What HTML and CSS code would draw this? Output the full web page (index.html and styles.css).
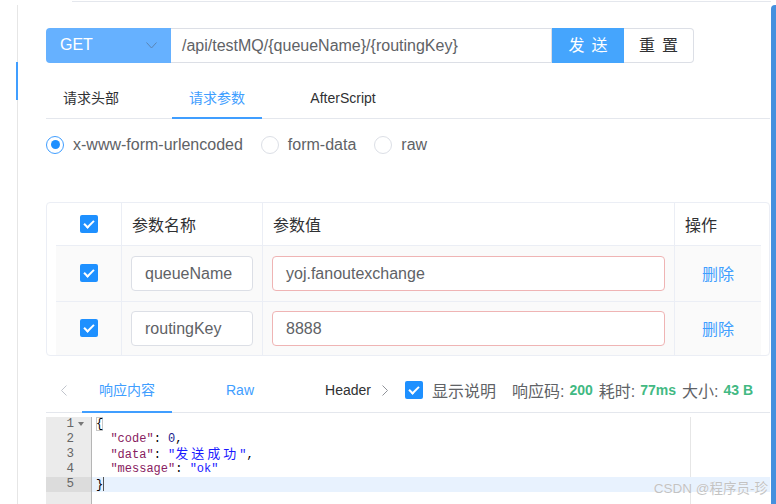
FILE: index.html
```html
<!DOCTYPE html>
<html lang="zh">
<head>
<meta charset="utf-8">
<title>API 调试</title>
<link rel="stylesheet" href="styles.css">
</head>
<body>
<div class="app">
  <aside class="side"><div class="side-active"></div></aside>
  <main class="main">
    <div class="topline"></div>
    <div class="reqbar">
      <div class="method">
        <span class="method-text">GET</span>
        <svg class="chev" width="11" height="7" viewBox="0 0 11 7"><polyline points="0.5,0.5 5.5,6 10.5,0.5" fill="none" stroke="#5a84b4" stroke-width="1"/></svg>
      </div>
      <div class="url">/api/testMQ/{queueName}/{routingKey}</div>
      <button class="btn btn-send">发送</button>
      <button class="btn btn-reset">重置</button>
    </div>

    <div class="tabs">
      <div class="tab">请求头部</div>
      <div class="tab active">请求参数</div>
      <div class="tab">AfterScript</div>
    </div>

    <div class="radios">
      <label class="radio"><span class="radio-dot checked"></span>x-www-form-urlencoded</label>
      <label class="radio"><span class="radio-dot"></span>form-data</label>
      <label class="radio"><span class="radio-dot"></span>raw</label>
    </div>

    <div class="table">
      <div class="tr th">
        <div class="td td-cb"><span class="cb"></span></div>
        <div class="td td-text">参数名称</div>
        <div class="td td-text">参数值</div>
        <div class="td td-text td-last">操作</div>
      </div>
      <div class="tr row">
        <div class="td td-cb"><span class="cb"></span></div>
        <div class="td td-input"><div class="input">queueName</div></div>
        <div class="td td-input"><div class="input input-warn">yoj.fanoutexchange</div></div>
        <div class="td td-op td-last"><span class="link">删除</span></div>
      </div>
      <div class="tr row">
        <div class="td td-cb"><span class="cb"></span></div>
        <div class="td td-input"><div class="input">routingKey</div></div>
        <div class="td td-input"><div class="input input-warn">8888</div></div>
        <div class="td td-op td-last"><span class="link">删除</span></div>
      </div>
    </div>

    <div class="rtabs">
      <span class="nav-arrow">
        <svg width="6" height="11" viewBox="0 0 6 11"><polyline points="5.5,0.5 0.5,5.5 5.5,10.5" fill="none" stroke="#c0c4cc" stroke-width="1"/></svg>
      </span>
      <span class="rtab active">响应内容</span>
      <span class="rtab rtab-raw">Raw</span>
      <span class="rtab rtab-header">Header</span>
      <span class="nav-next">
        <svg width="6" height="11" viewBox="0 0 6 11"><polyline points="0.5,0.5 5.5,5.5 0.5,10.5" fill="none" stroke="#909399" stroke-width="1"/></svg>
      </span>
      <span class="cb cb-meta"></span>
      <span class="meta-show">显示说明</span>
      <span class="meta-label meta-first">响应码:</span><b class="meta-val">200</b>
      <span class="meta-label">耗时:</span><b class="meta-val">77ms</b>
      <span class="meta-label">大小:</span><b class="meta-val">43 B</b>
    </div>

    <div class="editor">
      <div class="gutter">
        <div class="gl"><span>1</span><span class="fold"><i class="fold-tri"></i></span></div>
        <div class="gl"><span>2</span><span class="fold"></span></div>
        <div class="gl"><span>3</span><span class="fold"></span></div>
        <div class="gl"><span>4</span><span class="fold"></span></div>
        <div class="gl gl-active"><span>5</span><span class="fold"></span></div>
      </div>
      <div class="code">
        <div class="cl"><span class="bracket">{</span></div>
        <div class="cl">  <span class="k">"code"</span>: <span class="n">0</span>,</div>
        <div class="cl">  <span class="k">"data"</span>: <span class="s">"<span class="cjk">发送成功</span>"</span>,</div>
        <div class="cl">  <span class="k">"message"</span>: <span class="s">"ok"</span></div>
        <div class="cl cl-active">}<span class="cursor"></span></div>
      </div>
    </div>
  </main>
  <div class="scrollbar"></div>
  <div class="watermark">CSDN @程序员-珍</div>
</div>
</body>
</html>
```
FILE: styles.css
```css
* { box-sizing: border-box; }
html, body { margin: 0; padding: 0; background: #fff; }
body {
  font-family: "Liberation Sans", "Noto Sans CJK SC", sans-serif;
  color: #303133;
}
.app {
  position: relative;
  display: flex;
  width: 776px;
  height: 504px;
  overflow: hidden;
}

/* left sidebar edge */
.side {
  width: 18px;
  flex: none;
  margin-top: 5px;
  border-right: 1px solid #e6e6e6;
  display: flex;
  justify-content: flex-end;
}
.side-active {
  width: 2px;
  height: 38px;
  margin-top: 57px;
  margin-right: -1px;
  background: #409eff;
}

/* right scrollbar */
.scrollbar {
  width: 5px;
  flex: none;
  margin-top: 5px;
  background: #4590de;
  border-top-left-radius: 4px;
}

.main {
  flex: 1;
  min-width: 0;
  padding: 1px 1px 0 28px;
  display: flex;
  flex-direction: column;
}
.topline {
  height: 1px;
  margin-left: 26px;
  margin-right: -1px;
  background: #e4e7ed;
}

/* request bar */
.reqbar {
  display: flex;
  height: 35px;
  margin-top: 26px;
}
.method {
  width: 125px;
  display: flex;
  align-items: center;
  padding: 0 14px;
  background: #66b1ff;
  border-radius: 4px 0 0 4px;
  color: #fff;
  font-size: 16px;
}
.method-text { line-height: 18px; }
.chev { margin-left: auto; }
.url {
  width: 381px;
  border: 1px solid #dcdfe6;
  border-left: none;
  padding-left: 11px;
  font-size: 16px;
  line-height: 33px;
  color: #606266;
  white-space: nowrap;
}
.btn {
  font-family: "Liberation Sans", "Noto Sans CJK SC", sans-serif;
  font-size: 16px;
  letter-spacing: 7px;
  padding: 0 0 0 7px;
  margin: 0;
  line-height: 33px;
  cursor: pointer;
}
.btn-send {
  width: 72px;
  border: none;
  background: #45a5fd;
  color: #fff;
}
.btn-reset {
  width: 70px;
  border: 1px solid #dcdfe6;
  border-left: none;
  border-radius: 0 4px 4px 0;
  background: #fff;
  color: #303133;
}

/* request tabs */
.tabs {
  display: flex;
  gap: 36px;
  height: 40px;
  margin-top: 17px;
  border-bottom: 1px solid #e4e7ed;
}
.tab {
  width: 90px;
  text-align: center;
  font-size: 14px;
  line-height: 36px;
  color: #303133;
}
.tab.active {
  color: #409eff;
  border-bottom: 2px solid #409eff;
  margin-bottom: -1px;
}

/* radios */
.radios {
  display: flex;
  align-items: center;
  height: 20px;
  margin-top: 16px;
}
.radio {
  display: flex;
  align-items: center;
  margin-right: 18px;
  font-size: 16px;
  line-height: 20px;
  color: #606266;
}
.radio-dot {
  width: 18px;
  height: 18px;
  border: 1px solid #dcdfe6;
  border-radius: 50%;
  margin-right: 9px;
  display: flex;
  align-items: center;
  justify-content: center;
  background: #fff;
}
.radio-dot.checked { border-color: #409eff; }
.radio-dot.checked::after {
  content: "";
  width: 9px;
  height: 9px;
  border-radius: 50%;
  background: #1e90ff;
}

/* checkbox */
.cb {
  display: inline-flex;
  align-items: center;
  justify-content: center;
  width: 18px;
  height: 18px;
  border-radius: 2px;
  background: #1e90ff;
}
.cb::after {
  content: "";
  width: 4px;
  height: 8px;
  margin-top: -2px;
  border: solid #fff;
  border-width: 0 2px 2px 0;
  transform: rotate(45deg);
}

/* table */
.table {
  margin-top: 47px;
  border: 1px solid #ebeef5;
  border-radius: 4px;
  padding: 0 8px 0 9px;
}
.tr {
  display: grid;
  grid-template-columns: 66px 141px 412px 86px;
}
.th { height: 43px; border-bottom: 1px solid #ebeef5; }
.row { height: 55px; background: #fafafa; }
.row + .row { border-top: 1px solid #ebeef5; height: 54px; }
.td {
  display: flex;
  align-items: center;
  border-right: 1px solid #ebeef5;
}
.td-last { border-right: none; }
.td-cb { justify-content: center; }
.td-text {
  padding-left: 10px;
  font-size: 16px;
  color: #303133;
}
.td-input { padding: 0 9px 0 9px; }
.input {
  width: 100%;
  height: 35px;
  border: 1px solid #dcdfe6;
  border-radius: 4px;
  background: #fff;
  padding-left: 13px;
  font-size: 16px;
  line-height: 33px;
  color: #606266;
  white-space: nowrap;
}
.input-warn { border-color: #efb4b4; }
.td-op { justify-content: center; }
.link { font-size: 16px; color: #409eff; }

/* response tabs */
.rtabs {
  display: flex;
  align-items: center;
  height: 42px;
  margin-top: 16px;
  padding-bottom: 3px;
  border-bottom: 1px solid #e4e7ed;
  font-size: 14px;
}
.nav-arrow {
  width: 36px;
  display: flex;
  justify-content: center;
}
.nav-arrow svg, .nav-next svg { display: block; }
.rtab { line-height: 20px; }
.rtab.active {
  width: 90px;
  text-align: center;
  color: #409eff;
  align-self: stretch;
  padding-top: 8px;
  border-bottom: 2px solid #409eff;
  margin-bottom: -4px;
}
.rtab-raw { margin-left: 54px; color: #409eff; }
.rtab-header { margin-left: 71px; color: #303133; }
.nav-next { margin-left: 11px; }
.cb-meta { margin-left: 17px; }
.meta-show {
  margin-left: 9px;
  font-size: 16px;
  color: #606266;
}
.meta-label {
  font-size: 16px;
  color: #606266;
  margin-left: 6px;
  margin-right: 5px;
}
.meta-first { margin-left: 16px; }
.meta-val {
  font-size: 14px;
  font-weight: bold;
  color: #42b983;
}

/* editor */
.editor {
  display: flex;
  height: 90px;
  margin-top: 4px;
  font-family: "Liberation Mono", "DejaVu Sans Mono", monospace;
  font-size: 12px;
}
.gutter {
  width: 46px;
  flex: none;
  background: #ebebeb;
  border-right: 1px solid #b5b5b5;
}
.gl {
  display: flex;
  justify-content: flex-end;
  height: 15px;
  line-height: 15px;
  padding-right: 4px;
  color: #666;
  font-size: 12.5px;
}
.gl-active { background: #dcdcdc; }
.fold {
  width: 13px;
  height: 15px;
  display: flex;
  align-items: center;
  justify-content: center;
}
.fold-tri {
  width: 0;
  height: 0;
  margin-left: 1px;
  border-left: 3px solid transparent;
  border-right: 3px solid transparent;
  border-top: 4px solid #777;
}
.code {
  flex: 1;
  background: linear-gradient(#e6e6e6, #e6e6e6) no-repeat 598px 0 / 1px 100%;
}
.cl {
  height: 15px;
  line-height: 15px;
  padding-left: 4px;
  white-space: pre;
  color: #000;
}
.cl-active { background: #e8f2fe; }
.k { color: #882060; }
.s { color: #1a1aff; }
.n { color: #1a1a8c; }
.cjk {
  font-family: "Noto Sans CJK SC", sans-serif;
  font-size: 13px;
  line-height: 12px;
  letter-spacing: 3px;
}
.bracket { box-shadow: inset 0 0 0 1px #c8c8c8; }
.cursor {
  display: inline-block;
  width: 0;
  height: 14px;
  vertical-align: -3px;
  border-left: 1px solid #555;
}

/* watermark */
.watermark {
  position: absolute;
  right: 8px;
  bottom: 7px;
  font-size: 13.5px;
  line-height: 16px;
  color: #c3c3c3;
  text-shadow: 0 0 1px #fff;
}
```
